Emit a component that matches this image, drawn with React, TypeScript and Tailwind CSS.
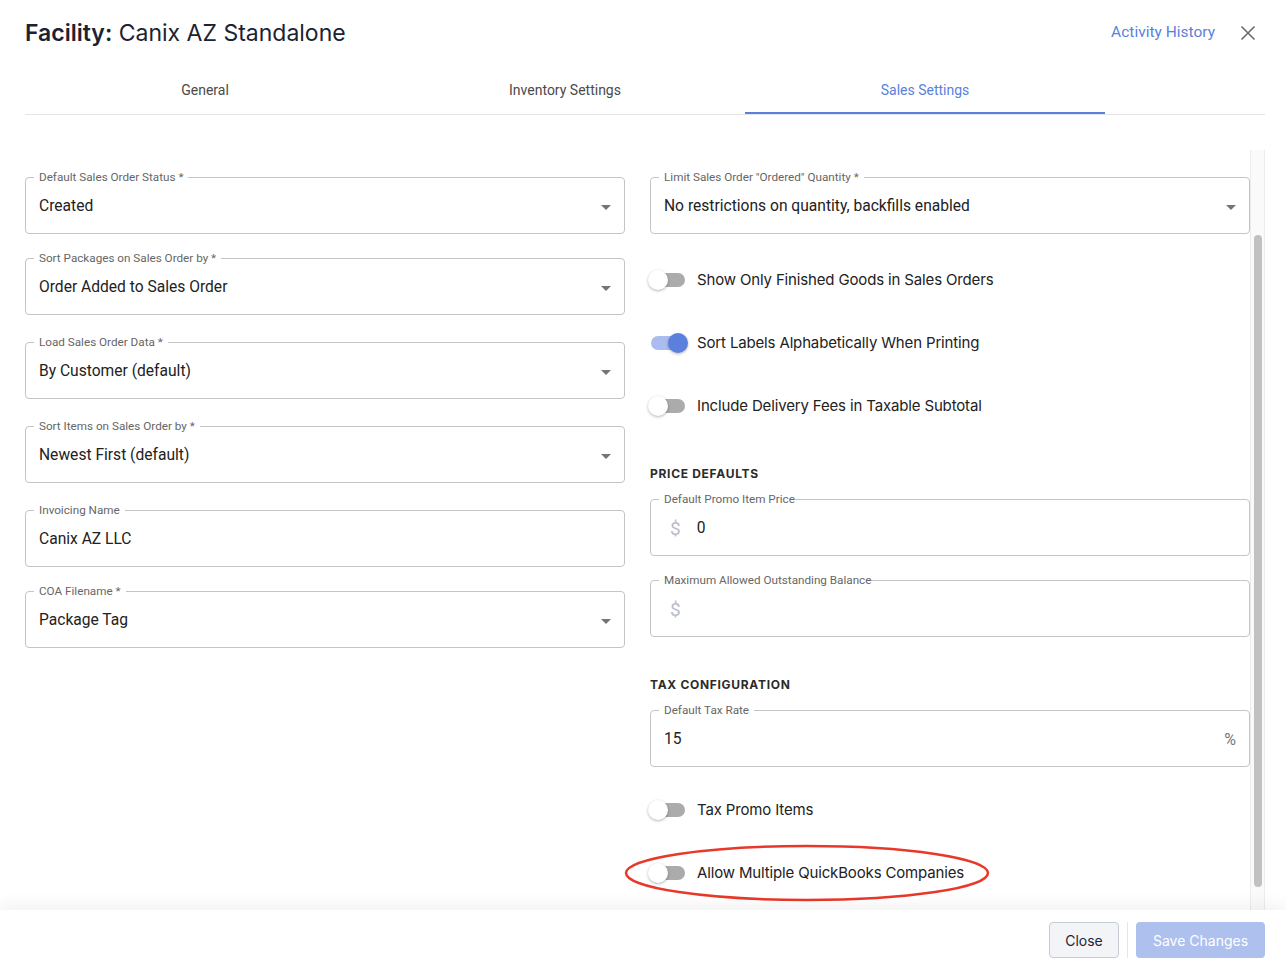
import { ReactNode } from 'react';
import clsx from 'clsx';

const roboto = "font-['Roboto','Liberation_Sans',sans-serif]";
const inter = "font-['Inter','Liberation_Sans',sans-serif]";

interface FieldProps {
  label: string;
  value?: string;
  select?: boolean;
  prefix?: string;
  suffix?: string;
  tight?: boolean;
  className?: string;
}

function Field({ label, value, select, prefix, suffix, tight, className }: FieldProps) {
  return (
    <fieldset
      className={clsx(
        'h-[63px] rounded-[4px] border border-[#c4c4c4] px-2',
        roboto,
        className,
      )}
    >
      <legend
        className={clsx(
          'text-[11.7px] leading-[12px] text-[#666]',
          tight ? 'pl-[5px] pr-0' : 'px-[5px]',
        )}
      >
        {label}
      </legend>
      <div className="mt-[1px] flex h-[46px] items-center pl-[5px] pr-[5px] text-[15.6px] text-[#222]">
        {prefix && (
          <span className="pl-[6px] pr-[16px] text-[19px] text-[#b9bdcb]">{prefix}</span>
        )}
        <span className="flex-1">{value}</span>
        {suffix && <span className="text-[16px] text-[#777]">{suffix}</span>}
        {select && (
          <svg width="10" height="5" viewBox="0 0 10 5">
            <path d="M0 0l5 5 5-5z" fill="#757575" />
          </svg>
        )}
      </div>
    </fieldset>
  );
}

function Toggle({ label, on, className, children }: { label: string; on?: boolean; className?: string; children?: ReactNode }) {
  return (
    <div className={clsx('relative flex h-[38px] items-center', className)}>
      {children}
      <div className="relative -ml-[11px] h-[38px] w-[58px] shrink-0">
        <div
          className={clsx(
            'absolute left-[12px] top-[12px] h-[14px] w-[34px] rounded-full',
            on ? 'bg-[#abbcee]' : 'bg-[#ababab]',
          )}
        />
        <div
          className={clsx(
            'absolute top-[9px] h-[20px] w-[20px] rounded-full shadow-[0_1px_3px_rgba(0,0,0,0.3)]',
            on ? 'left-[29px] bg-[#5b7fdd]' : 'left-[9px] bg-white',
          )}
        />
      </div>
      <span className={clsx(inter, 'text-[15px] tracking-[-0.15px] text-[#222]')}>{label}</span>
    </div>
  );
}

function SectionTitle({ children, className }: { children: ReactNode; className?: string }) {
  return (
    <div className={clsx(inter, 'text-[12px] font-bold leading-4 tracking-[0.7px] text-[#2b2b2b]', className)}>
      {children}
    </div>
  );
}

const tabs = ['General', 'Inventory Settings', 'Sales Settings'];

export default function App() {
  return (
    <div className="relative flex h-[963px] w-full flex-col overflow-hidden bg-white">
      {/* header */}
      <div className="flex items-center pl-[25px] pr-[30px] pt-[17px]">
        <h1 className={clsx(inter, 'flex-1 text-[23px] leading-8 text-[#1b2333]')}>
          <span className="font-semibold">Facility:</span> Canix AZ Standalone
        </h1>
        <button className={clsx(roboto, 'text-[15.5px] text-[#5a7fdc]')}>Activity History</button>
        <button className="ml-[25px] flex h-[16px] w-[16px] items-center justify-center">
          <svg width="16" height="16" viewBox="0 0 16 16">
            <path d="M1.5 1.5l13 13M14.5 1.5l-13 13" stroke="#6b6b6b" strokeWidth="1.6" />
          </svg>
        </button>
      </div>

      {/* tabs */}
      <div className="ml-[25px] mr-[21px] mt-[17px] flex border-b border-[#e4e4e4]">
        {tabs.map((t, i) => (
          <div
            key={t}
            className={clsx(
              roboto,
              'relative flex h-[48px] w-[360px] items-center justify-center text-[14px]',
              i === 2 ? 'text-[#5a7fdc]' : 'text-[#4a4a4a]',
            )}
          >
            {t}
            {i === 2 && <span className="absolute inset-x-0 bottom-0 h-[2px] bg-[#5b7fdd]" />}
          </div>
        ))}
      </div>

      {/* body */}
      <div className="ml-[25px] mr-[21px] mt-[35px] flex min-h-0 flex-1">
        <div className="grid flex-1 grid-cols-[600px_600px] gap-x-[25px] pt-[21px]">
          <div className="flex flex-col">
            <Field label="Default Sales Order Status *" value="Created" select />
            <Field className="mt-[18px]" label="Sort Packages on Sales Order by *" value="Order Added to Sales Order" select />
            <Field className="mt-[21px]" label="Load Sales Order Data *" value="By Customer (default)" select />
            <Field className="mt-[21px]" label="Sort Items on Sales Order by *" value="Newest First (default)" select />
            <Field className="mt-[21px]" label="Invoicing Name" value="Canix AZ LLC" />
            <Field className="mt-[18px]" label="COA Filename *" value="Package Tag" select />
          </div>
          <div className="flex flex-col">
            <Field label={'Limit Sales Order "Ordered" Quantity *'} value="No restrictions on quantity, backfills enabled" select />
            <Toggle className="mt-[27px]" label="Show Only Finished Goods in Sales Orders" />
            <Toggle className="mt-[25px]" label="Sort Labels Alphabetically When Printing" on />
            <Toggle className="mt-[25px]" label="Include Delivery Fees in Taxable Subtotal" />
            <SectionTitle className="mt-[41px]">PRICE DEFAULTS</SectionTitle>
            <Field className="mt-[11px]" tight label="Default Promo Item Price" prefix="$" value="0" />
            <Field className="mt-[18px]" tight label="Maximum Allowed Outstanding Balance" prefix="$" />
            <SectionTitle className="mt-[40px]">TAX CONFIGURATION</SectionTitle>
            <Field className="mt-[11px]" label="Default Tax Rate" value="15" suffix="%" />
            <Toggle className="mt-[24px]" label="Tax Promo Items" />
            <Toggle className="mt-[25px]" label="Allow Multiple QuickBooks Companies">
              <svg
                className="pointer-events-none absolute -left-[26px] -top-[10px]"
                width="366"
                height="58"
                viewBox="0 0 366 58"
              >
                <ellipse cx="183" cy="29" rx="181" ry="27" fill="none" stroke="#e8382a" strokeWidth="2.5" />
              </svg>
            </Toggle>
          </div>
        </div>
        {/* scrollbar */}
        <div className="w-[15px] shrink-0 border-x border-[#ececec] bg-[#fafafa]">
          <div className="mx-auto mt-[85px] h-[652px] w-[8px] rounded-full bg-[#c1c1c1]" />
        </div>
      </div>

      {/* footer */}
      <div className="relative z-10 flex h-[53px] shrink-0 items-start justify-end bg-white pr-[21px] pt-[12px] shadow-[0_-6px_14px_rgba(0,0,0,0.05)]">
        <button
          className={clsx(
            inter,
            'h-[36px] w-[70px] rounded-[4px] border border-[#c6cbd6] bg-[#f3f4f8] text-[14px] text-[#1f2533]',
          )}
        >
          Close
        </button>
        <div className="mx-[8px] h-[36px] w-px bg-[#e3e5ea]" />
        <button
          className={clsx(inter, 'h-[36px] w-[129px] rounded-[4px] bg-[#adc0ee] text-[14px] text-white')}
        >
          Save Changes
        </button>
      </div>
    </div>
  );
}
